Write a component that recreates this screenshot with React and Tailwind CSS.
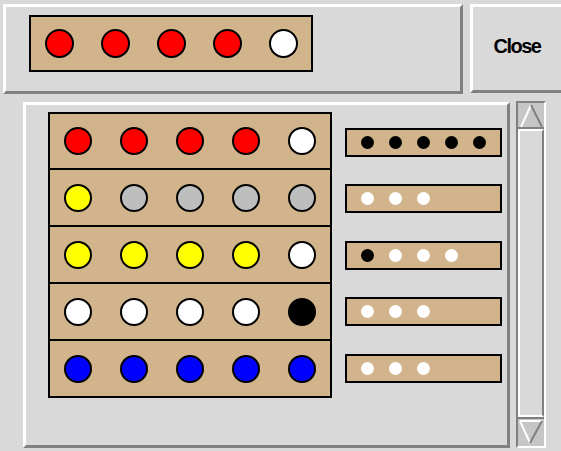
import React from "react";

const COLORS = {
  R: "bg-[#ff0000]",
  W: "bg-white",
  Y: "bg-[#ffff00]",
  G: "bg-[#bebebe]",
  B: "bg-[#0000ff]",
  K: "bg-black",
};

const secret = ["R", "R", "R", "R", "W"];

const guesses = [
  { pegs: ["R", "R", "R", "R", "W"], score: ["K", "K", "K", "K", "K"] },
  { pegs: ["Y", "G", "G", "G", "G"], score: ["W", "W", "W"] },
  { pegs: ["Y", "Y", "Y", "Y", "W"], score: ["K", "W", "W", "W"] },
  { pegs: ["W", "W", "W", "W", "K"], score: ["W", "W", "W"] },
  { pegs: ["B", "B", "B", "B", "B"], score: ["W", "W", "W"] },
];

const raised =
  "border-[3px] border-t-white border-l-white border-b-[#808080] border-r-[#808080]";

function Peg({ color, size = "w-[28px] h-[28px]" }) {
  return (
    <div
      className={`${size} rounded-full border-2 border-black ${COLORS[color]}`}
    />
  );
}

function PegRow({ pegs, size, className = "" }) {
  return (
    <div className={`grid grid-cols-5 items-center ${className}`}>
      {pegs.map((c, i) => (
        <div key={i} className="flex justify-center">
          <Peg color={c} size={size} />
        </div>
      ))}
    </div>
  );
}

function ScoreBox({ score }) {
  return (
    <div className="w-[157px] h-[29px] border-2 border-black bg-[#d2b48c] flex items-center pl-[14px] gap-[15px]">
      {score.map((c, i) => (
        <div key={i} className={`w-[13px] h-[13px] rounded-full ${COLORS[c]}`} />
      ))}
    </div>
  );
}

function UpArrow() {
  return (
    <svg width="24" height="26" viewBox="0 0 24 26">
      <line x1="12" y1="2" x2="2" y2="24" stroke="#ffffff" strokeWidth="2" />
      <line x1="12" y1="2" x2="23" y2="24" stroke="#808080" strokeWidth="2" />
    </svg>
  );
}

function DownArrow() {
  return (
    <svg width="24" height="27" viewBox="0 0 24 27">
      <line x1="1" y1="2" x2="23" y2="2" stroke="#ffffff" strokeWidth="2" />
      <line x1="1" y1="2" x2="11" y2="24" stroke="#ffffff" strokeWidth="2" />
      <line x1="23" y1="2" x2="11" y2="24" stroke="#808080" strokeWidth="2" />
    </svg>
  );
}

function Scrollbar() {
  return (
    <div className="w-[30px] h-[347px] border-2 border-t-[#808080] border-l-[#808080] border-b-white border-r-white flex flex-col">
      <div className="h-[26px] bg-[#c6c6c6] border-b-2 border-[#808080] flex justify-center overflow-hidden">
        <UpArrow />
      </div>
      <div className="flex-1 border-2 border-t-white border-l-white border-b-white border-r-[#808080]" />
      <div className="h-[29px] bg-[#c6c6c6] border-t-2 border-[#808080] flex justify-center overflow-hidden">
        <DownArrow />
      </div>
    </div>
  );
}

export default function App() {
  return (
    <div
      className="w-[561px] h-[451px] bg-[#d9d9d9] overflow-hidden"
      style={{ fontFamily: '"Liberation Sans", Arial, sans-serif' }}
    >
      {/* secret code + close button */}
      <div className="flex pt-[4px] pl-[3px] gap-[7px]">
        <div className={`shrink-0 w-[460px] h-[90px] ${raised} pl-[23px] pt-[8px]`}>
          <PegRow
            pegs={secret}
            size="w-[29px] h-[29px]"
            className="w-[284px] h-[57px] border-2 border-black bg-[#d2b48c]"
          />
        </div>
        <button
          className={`shrink-0 w-[94px] h-[89px] ${raised} flex items-center justify-center pb-[5px] text-[20px] font-bold tracking-[-1.5px] text-black`}
        >
          Close
        </button>
      </div>

      {/* guess history */}
      <div className="flex mt-[8px] pl-[23px] gap-[6px]">
        <div className={`shrink-0 w-[487px] h-[346px] ${raised} pl-[19px] pt-[7px] flex`}>
          <div className="ml-[3px] w-[284px] border-2 border-black bg-[#d2b48c] self-start">
            {guesses.map((g, i) => (
              <PegRow
                key={i}
                pegs={g.pegs}
                className={i > 0 ? "h-[57px] border-t-2 border-black" : "h-[54px]"}
              />
            ))}
          </div>
          <div className="ml-[13px] flex flex-col pt-[2px]">
            {guesses.map((g, i) => (
              <div key={i} className="h-[56.5px] flex items-center">
                <ScoreBox score={g.score} />
              </div>
            ))}
          </div>
        </div>
        <div className="shrink-0 -mt-[1px]">
          <Scrollbar />
        </div>
      </div>
    </div>
  );
}
